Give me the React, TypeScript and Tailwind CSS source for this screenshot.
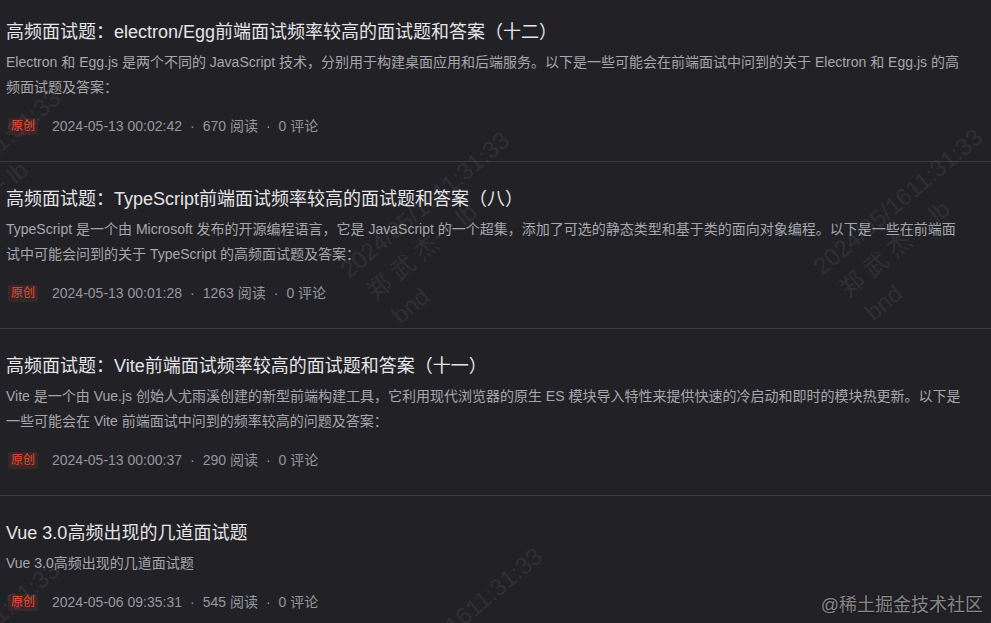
import React from 'react';

interface Article {
  title: string;
  desc: string;
  date: string;
  reads: number;
  comments: number;
}

const articles: Article[] = [
  {
    title: '高频面试题：electron/Egg前端面试频率较高的面试题和答案（十二）',
    desc: 'Electron 和 Egg.js 是两个不同的 JavaScript 技术，分别用于构建桌面应用和后端服务。以下是一些可能会在前端面试中问到的关于 Electron 和 Egg.js 的高频面试题及答案：',
    date: '2024-05-13 00:02:42',
    reads: 670,
    comments: 0,
  },
  {
    title: '高频面试题：TypeScript前端面试频率较高的面试题和答案（八）',
    desc: 'TypeScript 是一个由 Microsoft 发布的开源编程语言，它是 JavaScript 的一个超集，添加了可选的静态类型和基于类的面向对象编程。以下是一些在前端面试中可能会问到的关于 TypeScript 的高频面试题及答案：',
    date: '2024-05-13 00:01:28',
    reads: 1263,
    comments: 0,
  },
  {
    title: '高频面试题：Vite前端面试频率较高的面试题和答案（十一）',
    desc: 'Vite 是一个由 Vue.js 创始人尤雨溪创建的新型前端构建工具，它利用现代浏览器的原生 ES 模块导入特性来提供快速的冷启动和即时的模块热更新。以下是一些可能会在 Vite 前端面试中问到的频率较高的问题及答案：',
    date: '2024-05-13 00:00:37',
    reads: 290,
    comments: 0,
  },
  {
    title: 'Vue 3.0高频出现的几道面试题',
    desc: 'Vue 3.0高频出现的几道面试题',
    date: '2024-05-06 09:35:31',
    reads: 545,
    comments: 0,
  },
];

// 水印左上角（旋转原点）
const marks = [
  { x: -116, y: 218 },
  { x: 333, y: 260 },
  { x: 806, y: 257 },
  { x: -117, y: 690 },
  { x: 366, y: 676 },
  { x: 880, y: 700 },
];

const Watermark: React.FC<{ x: number; y: number }> = ({ x, y }) => (
  <div
    className="absolute pointer-events-none select-none origin-top-left -rotate-[40deg] text-left whitespace-nowrap text-[24px] leading-[34px] text-white/[0.085]"
    style={{ left: x, top: y }}
  >
    <div>2024/05/1611:31:33</div>
    <div className="pl-[6px]">郑 武 杰一 lb</div>
    <div className="pl-[10px]">bnd</div>
  </div>
);

const ArticleItem: React.FC<{ item: Article }> = ({ item }) => (
  <div className="pt-[25px] pb-[25px] pl-[6px] pr-[28px] border-b border-[#3a3a3f]">
    <h4 className="text-[18px] leading-[24px] text-[#e4e4e8] font-normal whitespace-nowrap">
      {item.title}
    </h4>
    <p className="mt-[6px] text-[14px] leading-[25px] text-[#a6a6ac]">{item.desc}</p>
    <div className="mt-[16px] flex items-center h-[20px] text-[14px] text-[#96969e]">
      <span className="ml-[2px] px-[3px] h-[17px] leading-[17px] text-[12px] rounded-[2px] bg-[#392727] text-[#ec4a36]">
        原创
      </span>
      <span className="ml-[14px]">{item.date}</span>
      <span className="mx-[8px]">·</span>
      <span>{item.reads} 阅读</span>
      <span className="mx-[8px]">·</span>
      <span>{item.comments} 评论</span>
    </div>
  </div>
);

export default function App() {
  return (
    <div
      className="relative w-full h-[623px] overflow-hidden bg-[#222226]"
      style={{ fontFamily: '"Liberation Sans", "Noto Sans CJK SC", sans-serif' }}
    >
      <div className="-mt-[5px]">
        {articles.map((a) => (
          <ArticleItem key={a.date} item={a} />
        ))}
      </div>

      {marks.map((m, i) => (
        <Watermark key={i} x={m.x} y={m.y} />
      ))}

      <div className="absolute right-[8px] bottom-[6px] text-[18px] leading-[24px] text-white/50 [text-shadow:0_0_2px_rgba(0,0,0,0.8)]">
        @稀土掘金技术社区
      </div>
    </div>
  );
}
